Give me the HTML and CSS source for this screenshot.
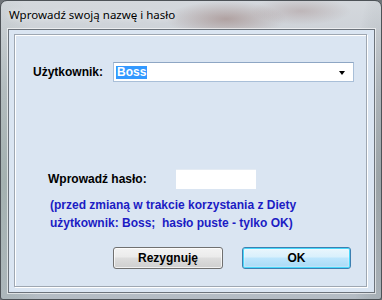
FILE: index.html
```html
<html>
<head>
    <title>Wprowadź swoją nazwę i hasło</title>
    <link rel="stylesheet" href="styles.css">
</head>

<body>
    <div class="window">
        <div class="titlebar">Wprowadź swoją nazwę i hasło</div>

        <div class="client">
            <div class="panel">
                <div class="user-row">
                    <label class="user-label">Użytkownik:</label>
                    <div class="combo">
                        <span class="combo-value">Boss</span>
                        <span class="combo-arrow"></span>
                    </div>
                </div>

                <div class="pass-row">
                    <label class="pass-label">Wprowadź hasło:</label>
                    <input class="pass-input" type="password">
                </div>

                <div class="hint">
                    (przed zmianą w trakcie korzystania z Diety<br>
                    użytkownik: Boss;&nbsp; hasło puste - tylko OK)
                </div>

                <div class="buttons">
                    <button class="btn">Rezygnuję</button>
                    <button class="btn btn-default">OK</button>
                </div>
            </div>
        </div>
    </div>
</body>
</html>
```

FILE: styles.css
```css
body {
    margin: 0;
    width: 382px;
    height: 300px;
    overflow: hidden;
    background: #6f7479;
}

.window {
    width: 380px;
    height: 298px;
    border: 1px solid #4d5257;
    border-radius: 7px 7px 3px 3px;
    background:
        radial-gradient(ellipse 60px 18px at 225px 18px, rgba(150, 120, 115, 0.55), transparent),
        radial-gradient(ellipse 50px 14px at 300px 10px, rgba(170, 150, 150, 0.5), transparent),
        radial-gradient(ellipse 40px 200px at 4px 180px, rgba(140, 160, 150, 0.5), transparent),
        radial-gradient(ellipse 30px 200px at 378px 180px, rgba(120, 130, 130, 0.5), transparent),
        linear-gradient(to bottom, #d4d8dd, #c1c7ce 30%, #b4bcc4);
    display: flex;
    flex-direction: column;
    font-family: "Liberation Sans", Arial, sans-serif;
}

.titlebar {
    height: 28px;
    line-height: 28px;
    padding-left: 8px;
    font-family: "Noto Sans", "Open Sans", sans-serif;
    font-size: 11.5px;
    color: #000;
    text-shadow: 0 0 6px rgba(255, 255, 255, 0.9);
}

.client {
    margin: 0 6px 6px 7px;
    flex: 1;
    border: 1px solid #6c737b;
    box-shadow: 0 0 0 1px rgba(255, 255, 255, 0.6);
    background: #dae5f2;
    padding: 4px 7px 5px 5px;
    display: flex;
}

.panel {
    flex: 1;
    border: 1px solid #9ea7b2;
    box-shadow: inset 1px 1px 0 #fff, 1px 1px 0 #fff;
    padding: 27px 0 0 18px;
    font-size: 12px;
    font-weight: bold;
}

.user-row {
    display: flex;
    align-items: center;
    height: 20px;
}

.user-label {
    width: 80px;
}

.combo {
    width: 237px;
    height: 18px;
    border: 1px solid #a9bfd8;
    border-top-color: #8ea6c4;
    background: #fff;
    display: flex;
    align-items: center;
    justify-content: space-between;
    padding: 0 8px 0 2px;
    box-sizing: content-box;
    width: 229px;
}

.combo-value {
    background: #3399ff;
    color: #fff;
    line-height: 13px;
    padding: 0 1px;
}

.combo-arrow {
    width: 0;
    height: 0;
    border-left: 3.5px solid transparent;
    border-right: 3.5px solid transparent;
    border-top: 4px solid #000;
    margin-top: 2px;
}

.pass-row {
    display: flex;
    align-items: center;
    margin-top: 87px;
    padding-left: 15px;
}

.pass-label {
    width: 128px;
}

.pass-input {
    width: 80px;
    height: 20px;
    border: none;
    border-top: 1px solid #e4ebf3;
    background: #fff;
    padding: 0;
    box-sizing: border-box;
}

.hint {
    margin-top: 7px;
    padding-left: 17px;
    line-height: 18px;
    color: #1c1cc4;
}

.buttons {
    display: flex;
    gap: 19px;
    margin-top: 15px;
    padding-left: 80px;
}

.btn {
    width: 110px;
    height: 22px;
    border: 1px solid #707070;
    border-radius: 3px;
    background: linear-gradient(to bottom, #f3f3f3, #ebebeb 45%, #dddddd 50%, #cfcfcf);
    box-shadow: inset 0 0 0 1px rgba(255, 255, 255, 0.7);
    font-family: "Liberation Sans", Arial, sans-serif;
    font-size: 12px;
    font-weight: bold;
    color: #000;
    padding: 0;
}

.btn-default {
    width: 109px;
    border-color: #3c7fb1;
    background: linear-gradient(to bottom, #eaf6fd, #d9f0fc 45%, #bee6fd 50%, #a7d9f5);
    box-shadow: inset 0 0 0 1px #48d8fb, inset 0 0 2px 1px rgba(255, 255, 255, 0.8);
}
```
